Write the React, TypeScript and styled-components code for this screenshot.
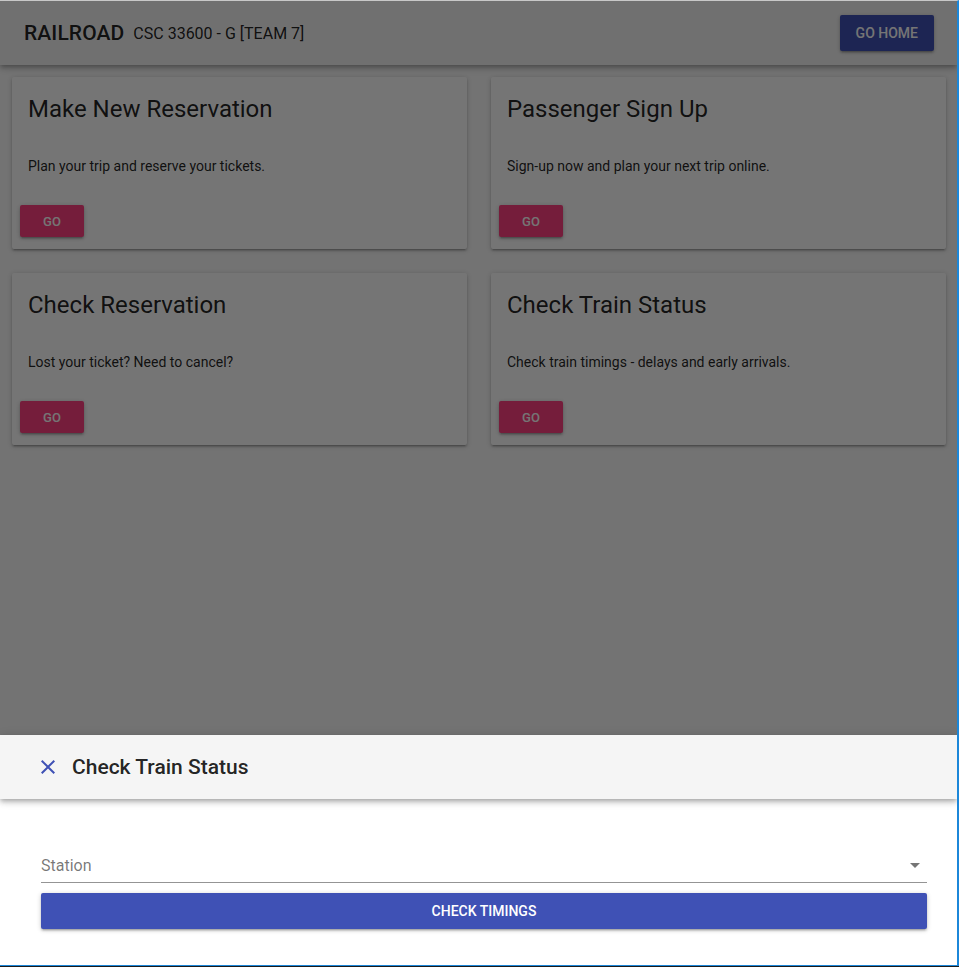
import React from 'react';
import styled, { createGlobalStyle } from 'styled-components';

const GlobalStyle = createGlobalStyle`
  html, body {
    margin: 0;
    padding: 0;
    background: #1b1b1b;
  }
  * {
    box-sizing: border-box;
  }
  body {
    font-family: Roboto, "Liberation Sans", Arial, sans-serif;
  }
`;

const Frame = styled.div`
  position: relative;
  width: 959px;
  height: 966px;
  overflow: hidden;
  border-top: 1px solid #c8c8c8;
  border-right: 2px solid #1c87d9;
  border-bottom: 1px solid #1c87d9;
  background: #fafafa;
`;

const AppBar = styled.header`
  display: flex;
  align-items: center;
  height: 64px;
  padding: 0 23px 0 24px;
  background: #f5f5f5;
  box-shadow: 0px 2px 4px -1px rgba(0, 0, 0, 0.2), 0px 4px 5px 0px rgba(0, 0, 0, 0.14),
    0px 1px 10px 0px rgba(0, 0, 0, 0.12);
  position: relative;
  z-index: 1;
`;

const Brand = styled.h1`
  margin: 0;
  font-size: 21px;
  font-weight: 500;
  color: rgba(0, 0, 0, 0.87);
  letter-spacing: 0.1px;
`;

const Course = styled.span`
  margin-left: 9px;
  font-size: 16px;
  color: rgba(0, 0, 0, 0.87);
  flex: 1;
`;

const Button = styled.button<{ $color: string; $small?: boolean; $block?: boolean }>`
  display: inline-flex;
  align-items: center;
  justify-content: center;
  border: 0;
  border-radius: 2px;
  background: ${({ $color }) => $color};
  color: #fff;
  font-family: Roboto, "Liberation Sans", Arial, sans-serif;
  font-weight: 500;
  text-transform: uppercase;
  font-size: ${({ $small }) => ($small ? '13px' : '14px')};
  min-width: ${({ $small }) => ($small ? '64px' : '88px')};
  height: ${({ $small }) => ($small ? '32px' : '36px')};
  padding: ${({ $small }) => ($small ? '0 8px' : '0 16px')};
  width: ${({ $block }) => ($block ? '100%' : 'auto')};
  box-shadow: 0px 1px 5px 0px rgba(0, 0, 0, 0.2), 0px 2px 2px 0px rgba(0, 0, 0, 0.14),
    0px 3px 1px -2px rgba(0, 0, 0, 0.12);
  cursor: pointer;
`;

const CardGrid = styled.main`
  display: grid;
  grid-template-columns: 1fr 1fr;
  gap: 24px;
  padding: 12px 11px 12px 12px;
`;

const Card = styled.section`
  background: #fff;
  border-radius: 2px;
  height: 172px;
  display: flex;
  flex-direction: column;
  box-shadow: 0px 1px 5px 0px rgba(0, 0, 0, 0.2), 0px 2px 2px 0px rgba(0, 0, 0, 0.14),
    0px 3px 1px -2px rgba(0, 0, 0, 0.12);
`;

const CardContent = styled.div`
  padding: 16px 16px 0;
`;

const CardTitle = styled.h2`
  margin: 0;
  font-size: 24px;
  line-height: 32px;
  font-weight: 400;
  color: rgba(0, 0, 0, 0.87);
`;

const CardText = styled.p`
  margin: 31px 0 0;
  font-size: 14px;
  line-height: 20px;
  color: rgba(0, 0, 0, 0.87);
`;

const CardActions = styled.div`
  display: flex;
  padding: 29px 8px 12px;
`;

const Backdrop = styled.div`
  position: absolute;
  inset: 0;
  background: rgba(0, 0, 0, 0.54);
  z-index: 5;
`;

const Drawer = styled.aside`
  position: absolute;
  left: 0;
  right: 0;
  bottom: 0;
  background: #fff;
  z-index: 10;
`;

const DrawerHeader = styled.div`
  display: flex;
  align-items: center;
  height: 64px;
  padding: 0 24px;
  background: #f5f5f5;
  box-shadow: 0px 2px 4px -1px rgba(0, 0, 0, 0.2), 0px 4px 5px 0px rgba(0, 0, 0, 0.14),
    0px 1px 10px 0px rgba(0, 0, 0, 0.12);
  position: relative;
`;

const IconButton = styled.button`
  display: flex;
  align-items: center;
  justify-content: center;
  width: 48px;
  height: 48px;
  padding: 12px;
  border: 0;
  background: transparent;
  color: #3f51b5;
  cursor: pointer;
`;

const DrawerTitle = styled.h3`
  margin: 0;
  font-size: 21px;
  font-weight: 500;
  color: rgba(0, 0, 0, 0.87);
`;

const DrawerBody = styled.div`
  padding: 51px 30px 36px 41px;
`;

const SelectField = styled.div`
  display: flex;
  align-items: center;
  height: 33px;
  padding-bottom: 2px;
  border-bottom: 1px solid rgba(0, 0, 0, 0.42);
  margin-bottom: 10px;
`;

const Placeholder = styled.span`
  flex: 1;
  font-size: 16px;
  color: rgba(0, 0, 0, 0.54);
`;

const ArrowIcon = styled.svg`
  width: 24px;
  height: 24px;
  fill: rgba(0, 0, 0, 0.54);
`;

const cards = [
  { title: 'Make New Reservation', text: 'Plan your trip and reserve your tickets.' },
  { title: 'Passenger Sign Up', text: 'Sign-up now and plan your next trip online.' },
  { title: 'Check Reservation', text: 'Lost your ticket? Need to cancel?' },
  { title: 'Check Train Status', text: 'Check train timings - delays and early arrivals.' },
];

const App = () => {
  return (
    <>
      <GlobalStyle />
      <Frame>
        <AppBar>
          <Brand>RAILROAD</Brand>
          <Course>CSC 33600 - G [TEAM 7]</Course>
          <Button $color="#3f51b5">Go Home</Button>
        </AppBar>
        <CardGrid>
          {cards.map((card) => (
            <Card key={card.title}>
              <CardContent>
                <CardTitle>{card.title}</CardTitle>
                <CardText>{card.text}</CardText>
              </CardContent>
              <CardActions>
                <Button $color="#ff4081" $small>
                  Go
                </Button>
              </CardActions>
            </Card>
          ))}
        </CardGrid>
        <Backdrop />
        <Drawer>
          <DrawerHeader>
            <IconButton aria-label="close">
              <svg width="24" height="24" viewBox="0 0 24 24" fill="currentColor">
                <path d="M19 6.41L17.59 5 12 10.59 6.41 5 5 6.41 10.59 12 5 17.59 6.41 19 12 13.41 17.59 19 19 17.59 13.41 12z" />
              </svg>
            </IconButton>
            <DrawerTitle>Check Train Status</DrawerTitle>
          </DrawerHeader>
          <DrawerBody>
            <SelectField>
              <Placeholder>Station</Placeholder>
              <ArrowIcon viewBox="0 0 24 24">
                <path d="M7 10l5 5 5-5z" />
              </ArrowIcon>
            </SelectField>
            <Button $color="#3f51b5" $block>
              Check Timings
            </Button>
          </DrawerBody>
        </Drawer>
      </Frame>
    </>
  );
};

export default App;
